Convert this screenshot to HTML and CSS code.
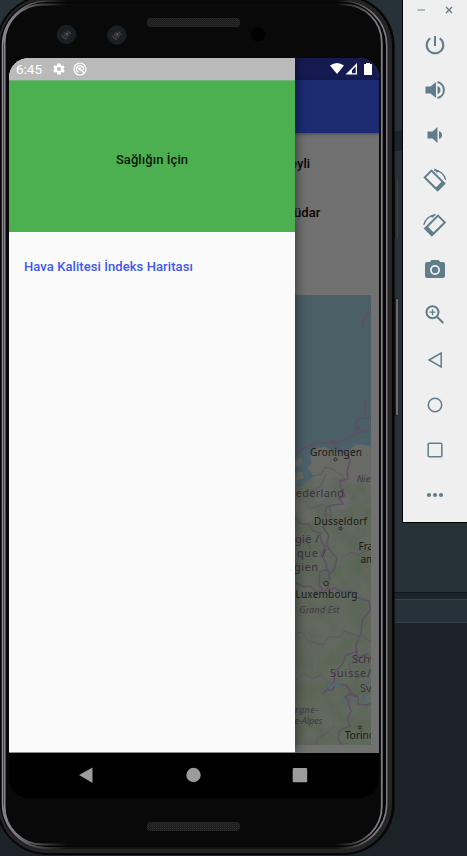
FILE: index.html
```html
<!DOCTYPE html>
<html lang="tr">
<head>
<meta charset="utf-8">
<title>Sağlığın İçin</title>
<link rel="stylesheet" href="styles.css">
</head>
<body>
<div class="desktop">
  <div class="backdrop"><div class="back-top"><i></i></div><div class="back-gap"></div><div class="back-bar"></div></div>
  <main class="phone">
    <svg class="shell" viewBox="0 0 402 856" width="402" height="856" aria-hidden="true">
      <defs>
        <linearGradient id="edge" gradientUnits="userSpaceOnUse" x1="0" y1="0" x2="395" y2="0">
          <stop offset="0" stop-color="#8d8b91"/><stop offset=".05" stop-color="#77757b"/><stop offset=".17" stop-color="#0b0b0b"/><stop offset=".85" stop-color="#0b0b0b"/><stop offset=".95" stop-color="#7f7d83"/><stop offset="1" stop-color="#7f7d83"/>
        </linearGradient>
        <linearGradient id="button" x1="0" x2="1" y1="0" y2="0"><stop offset="0" stop-color="#111"/><stop offset="1" stop-color="#444"/></linearGradient>
        <pattern id="mesh" width="2" height="2" patternUnits="userSpaceOnUse"><rect width="2" height="2" fill="#1b1b1b"/><rect width="1" height="1" fill="#2e2e2e"/><rect x="1" y="1" width="1" height="1" fill="#262626"/></pattern>
      </defs>
      <rect x="393" y="179" width="5" height="60" rx="1" fill="url(#button)"/>
      <rect x="393" y="298" width="5" height="118" rx="1" fill="#222"/>
      <path d="M397 299v116" stroke="#85807e" stroke-width="1.5"/>
      <rect x="-4" y="-5" width="398.700" height="860" rx="51" fill="#060606"/>
      <rect x="-2" y="-3" width="394" height="856" rx="49" fill="#242424"/>
      <rect x="0" y="0" width="388" height="848" rx="46" fill="#050505"/>
      <path d="M45 847.700H350" stroke="#444"/>
      <rect x="2.500" y="1" width="384.300" height="847" rx="45" fill="none" stroke="url(#edge)" stroke-width="1.600"/>
      <rect x="4.600" y="4.500" width="377.200" height="840" rx="38" fill="#090909" stroke="url(#edge)" stroke-width="1.800"/>
      <rect x="147" y="18" width="93" height="9" rx="4" fill="url(#mesh)"/>
      <rect x="147" y="822" width="93" height="9" rx="4" fill="url(#mesh)"/>
      <g id="cam"><circle cx="66.500" cy="34.500" r="9.700" fill="#192025"/><circle cx="66.500" cy="34.500" r="6" fill="#202023"/><circle cx="66.500" cy="34.500" r="3" fill="#343238"/><path d="M62 35q1 4 5 4M68 31l3 3" fill="none" stroke="#514d4c"/><circle cx="67" cy="34" r="1" fill="#68656f"/></g>
      <use href="#cam" x="50.300" y=".5"/>
      <circle cx="258" cy="34.500" r="7" fill="#000"/>
    </svg>
    <section class="screen">
      <div class="app">
        <div class="app-status">
          <svg width="44" height="14" viewBox="0 0 44 14" fill="#fff"><path d="M1 3.600Q8 -1.500 15 3.600L8 12Z"/><path fill-rule="evenodd" d="M28 1V12.500H16.500ZM26.700 4.500L23 8.300V11.300H26.700Z"/><path d="M37 1h4v1h2v11h-8V2h2z"/></svg>
        </div>
        <div class="app-bar"></div>
        <div class="app-body">
          <p class="line first">eyli</p>
          <p class="line second">üdar</p>
          <svg class="map" viewBox="295 295 76 450" width="76" height="450">
            <defs>
              <filter id="terrain" x="0" y="0" width="100%" height="100%" color-interpolation-filters="sRGB"><feTurbulence type="fractalNoise" baseFrequency=".06" numOctaves="3" seed="8"/><feColorMatrix values="0 0 0 0 .29  0 0 0 0 .38  0 0 0 0 .27  1.800 0 0 0 -.6"/></filter>
            </defs>
            <rect x="295" y="295" width="76" height="450" fill="#4b5f67"/>
            <path d="M295 460L302 452 314 448 325 447 332 450 342 453 350 449 356 444 371 446V745H295Z" fill="#686a66"/>
            <path d="M295 530L320 515 345 510 371 495V745H295Z" fill="#63695f"/>
            <rect x="295" y="478" width="76" height="267" filter="url(#terrain)" opacity=".45"/>
            <path d="M295 456l8-4 9-4 2 3-4 5 1 7-4 5 4 4 2 5-4 3-4 2-4 5-5-1 2-6 6-2-2-6-3 0-4 2zM295 466l4 1 4-6-3-4-5 3z" fill="#4a626b"/>
            <path d="M341 449l8-4 8-2 6-3 8 0" fill="none" stroke="#48646e" stroke-width="2.500"/>
            <g fill="none" stroke="#5f4f66" stroke-width="1.500" stroke-linejoin="round">
              <path d="M371 310Q363 318 362 330M366 400l-1 7-1 7 4 4 3 1M371 418q-13-2-15 5v8l4-3-5-1M371 429l-13 4-10 5-11 5-5-2-4 2h-12l-12 5-8 7"/>
              <path d="M332 441l4 7 12 6 2 7-3 10 1 8-8 2 1 8 4 7-6 2 4 6-10 1-7 3-1 6 2 8-4 5 6 9-3 9 6 8 5 5-3 12-5 4v12l-5 6M295 518l7 6 7 0 4 7 7 2 1 8 4 6-4 8 5 8 1 9M330 574l-3-5-7 3-1 13 4 5-6 2-7-6-6 1-8-4M326 590l9-2 7 4 9-1 7 7 11 3 1 9-8 11-1 12-5 12 1 13 9-4 3 1M358 651l-12 4-3 8-8 9-1 10-7 7-4 5 3-4h6l4-6 10 1 6 8 6 4v7l9 1 9-5 5-4M356 697l-6-3-5 3 5 6M348 703l3 8-4 8 3 7-10 4-2 8 4 7"/>
              <path d="M295 634l7-2 6 9 15 4 6-8h10l5-6 13 5 6-1 6 6 6 2M295 681l9-8 8 6 9-4 8 8M313 476l9-2 3-7 7 2 9 6 4 3M303 500l7 9 12-5 8 4 1 8M326 474l-5 12-8 4-3 5M298 540l9 1 4 9M343 557l9-5 6 3 10-5M355 650l2 9-8 5 2 10 5 4 9-3 6 4M316 745l1-6 10-6 8-8" stroke-width=".9" opacity=".85"/>
            </g>
            <g fill="none" stroke="#466986" stroke-width="2.200"><path d="M328 688q5-5 13-3M342 704l3-2M350 698l3 2M362 701l4-7M365 684l6-2"/></g>
            <g fill="none" stroke="#292929"><circle cx="335.500" cy="459.500" r="1.500"/><circle cx="340.500" cy="528.500" r="1.500"/><circle cx="326" cy="583.500" r="2.200"/><circle cx="360" cy="727.500" r="1.500"/></g>
            <g class="city"><text x="310" y="456" textLength="52">Groningen</text><text x="314" y="525" textLength="53">Dusseldorf</text><text x="358.500" y="550">Fra</text><text x="360.500" y="563">am</text><text x="295.500" y="597.500" textLength="62">Luxembourg</text><text x="345" y="738.500">Torino</text></g>
            <g class="country"><text x="287" y="497" textLength="57">Nederland</text><text x="295" y="543" textLength="24">gië /</text><text x="297" y="557" textLength="29">que /</text><text x="294" y="571" textLength="24">gien</text><text x="352" y="663">Schw</text><text x="330" y="677" textLength="41">Suisse/</text><text x="360" y="692">Svi</text></g>
            <g class="region"><text x="357" y="482">Niede</text><text x="299.500" y="613" textLength="40">Grand Est</text><text x="295" y="712.500" textLength="23">rgne-</text><text x="294.500" y="724" textLength="28">e-Alpes</text></g>
          </svg>
        </div>
      </div>
      <aside class="drawer">
        <div class="drawer-status"><span>6:45</span>
          <svg class="gear" width="12" height="12" viewBox="2 2 20 20" fill="#fff"><path fill-rule="evenodd" d="M19.400 13l.1-1-.1-1 2.100-1.700-2-3.500-2.500 1a8 8 0 0 0-1.700-1L15 3H9l-.4 2.800a8 8 0 0 0-1.700 1l-2.500-1-2 3.500L4.600 11l-.1 1 .1 1-2.200 1.700 2 3.500 2.500-1 1.700 1L9 21h6l.3-2.800 1.700-1 2.500 1 2-3.500zM12 15.500a3.500 3.500 0 1 1 0-7 3.500 3.500 0 0 1 0 7z"/></svg>
          <svg width="14" height="14" viewBox="0 0 14 14" fill="none" stroke="#fff"><circle cx="7" cy="7" r="6" stroke-width="1.200"/><path d="M5.500 10.200A3.500 3.500 0 1 1 10.200 8.300" stroke-width="1.300"/><path d="M6 6l5 5M6 8.300V6h2.300" stroke-width="1.300"/></svg>
        </div>
        <header class="drawer-head">Sağlığın İçin</header>
        <nav class="drawer-nav"><a>Hava Kalitesi İndeks Haritası</a></nav>
      </aside>
      <footer class="nav-keys">
        <svg width="370" height="45" viewBox="9 753 370 45" fill="#9c9c9c"><path d="M79 775L92.500 767.500V783Z"/><circle cx="193.500" cy="775" r="7.200"/><rect x="292.700" y="768" width="14.500" height="14.300" rx="1"/></svg>
      </footer>
    </section>
  </main>
  <aside class="tools">
    <div class="window-keys">
      <svg width="64" height="22" viewBox="0 0 64 22" fill="none" stroke="#607d8b"><path d="M14.500 10h7.500" stroke="#9cafb8" stroke-width="1.700"/><path d="M43 7l6 6M49 7l-6 6" stroke-width="1.400"/></svg>
    </div>
    <div class="tool"><svg viewBox="0 0 24 24"><path d="M12 3v10M7.300 5.200A8.300 8.300 0 1 0 16.700 5.200" class="stroke"/></svg></div>
    <div class="tool"><svg viewBox="0 0 24 24"><path d="M2.500 8.500h5L13 4v16l-5.500-4.500h-5zM14.500 8q3 1 3 4t-3 4z"/><path d="M14.500 4a8.200 8.200 0 0 1 0 16" class="stroke"/></svg></div>
    <div class="tool"><svg viewBox="0 0 24 24"><path d="M4.500 8.500h5L14.500 4v16l-5-4.500h-5zM16 8q3 1 3 4t-3 4z"/></svg></div>
    <div class="tool"><svg viewBox="0 0 24 24"><g id="rotate"><path d="M8.500 2.600L1.700 9.400 14.600 22.300 21.400 15.500Z" class="stroke"/><path d="M12.300 20l2.300 2.300 6.800-6.800-2.300-2.300z"/><path d="M11 2.200A12 12 0 0 1 22.700 12" class="thin"/><path d="M11 .5l6 2.800-3.500 1.500z"/></g></svg></div>
    <div class="tool"><svg viewBox="0 0 24 24"><use href="#rotate" transform="translate(23.500 0) scale(-1 1)"/></svg></div>
    <div class="tool"><svg viewBox="0 0 24 24"><path fill-rule="evenodd" d="M8.500 2h7l1.800 2H20a2 2 0 0 1 2 2v12a2 2 0 0 1-2 2H4a2 2 0 0 1-2-2V6a2 2 0 0 1 2-2h2.700zM12 7a5 5 0 1 0 0 10 5 5 0 0 0 0-10z"/><circle cx="12" cy="12" r="3.200"/></svg></div>
    <div class="tool"><svg viewBox="0 0 24 24"><circle cx="9.500" cy="9.200" r="6" class="stroke"/><path d="M14 13.700l6.300 6.300" class="stroke"/><path d="M9.500 6.200v6M6.500 9.200h6" class="thin"/></svg></div>
    <div class="tool"><svg viewBox="0 0 24 24"><path d="M6 12l12.200-7v14z" class="mid"/></svg></div>
    <div class="tool"><svg viewBox="0 0 24 24"><circle cx="12" cy="12" r="6.700" class="mid"/></svg></div>
    <div class="tool"><svg viewBox="0 0 24 24"><rect x="5.200" y="5.200" width="13.600" height="13.600" rx="1" class="mid"/></svg></div>
    <div class="tool"><svg viewBox="0 0 24 24"><circle cx="6" cy="12" r="2.100"/><circle cx="12" cy="12" r="2.100"/><circle cx="18" cy="12" r="2.100"/></svg></div>
  </aside>
</div>
</body>
</html>
```
FILE: styles.css
```css
* { box-sizing: border-box; }
body { margin: 0; font-family: Roboto, "Noto Sans", sans-serif; }
svg { display: block; }
.desktop { position: relative; display: flex; width: 467px; height: 856px; overflow: hidden; background: #1b2329; }
.backdrop { position: absolute; inset: 0; }
.back-top { height: 593px; padding-top: 131px; background: #273238; border-bottom: 1px solid #10181c; }
.back-top i { display: block; height: 20px; background: #1b252b; }
.back-gap { height: 6px; background: #1b252b; }
.back-bar { height: 24px; background: #273238; border: solid #35434a; border-width: 1px 0; }

.phone { position: relative; flex: 0 0 402px; padding: 58px 0 0 9px; }
.shell { position: absolute; inset: 0; }
.screen { position: relative; display: flex; flex-direction: column; width: 370px; height: 740px; overflow: hidden; border-radius: 20px; background: #000; }
.app { height: 695px; background: #717171; }
.app-status { display: flex; justify-content: flex-end; height: 22px; padding: 4px 6px 0 0; background: #151b50; }
.app-bar { position: relative; height: 53px; background: #1d2b73; box-shadow: 0 1px 3px #0006; }
.app-body { display: flex; flex-direction: column; padding-left: 286px; }
.line { margin: 0; font-size: 13px; line-height: 16px; font-weight: 500; letter-spacing: .1px; color: #080808; }
.first { margin: 23px 0 0 -5px; }
.second { margin: 33px 0 0 -1px; }
.map { margin-top: 74px; overflow: hidden; }
.map text { font-family: "Noto Sans", sans-serif; }
.city { font-size: 10px; fill: #191919; }
.country { font-size: 11px; fill: #3e3043; }
.region { font-size: 9px; font-style: italic; fill: #443747; }

.drawer { position: absolute; left: 0; top: 0; width: 286px; height: 695px; background: #fafafa; border-bottom: 1px solid #8b8b8b; box-shadow: 0 0 12px #0009; }
.drawer-status { display: flex; align-items: center; height: 22px; padding-left: 7px; background: #bababa; color: #fff; font-size: 13.5px; line-height: 22px; }
.drawer-status span { width: 37px; }
.gear { margin-right: 8px; }
.drawer-head { display: flex; align-items: center; justify-content: center; height: 152px; padding-top: 5px; background: #4caf50; border: solid #73b276; border-width: 1px 0 0; color: #0b170b; font-size: 13px; font-weight: 500; letter-spacing: .08px; }
.drawer-nav { padding: 26px 15px; color: #3f57f1; font-size: 13px; line-height: 17px; font-weight: 500; letter-spacing: .08px; }
.nav-keys { height: 45px; background: #000; }

.tools { position: relative; flex: 1; height: 523px; background: #efefef; border: solid #000; border-width: 0 0 1px 1px; }
.tool { display: flex; align-items: center; justify-content: center; height: 45px; }
.tool svg { width: 24px; height: 24px; fill: #607d8b; overflow: visible; }
.stroke, .mid, .thin { fill: none; stroke: #607d8b; }
.stroke { stroke-width: 2; }
.mid { stroke-width: 1.5; }
.thin { stroke-width: 1.3; }
```
